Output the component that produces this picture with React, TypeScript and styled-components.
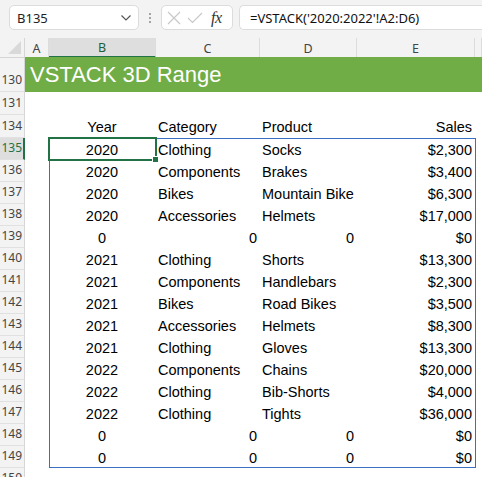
import React from "react";
import styled, { createGlobalStyle, css } from "styled-components";

const Global = createGlobalStyle`
  html, body { margin: 0; padding: 0; background: #ffffff; overflow: hidden; }
  body { width: 482px; height: 477px; }
`;

const UI = `"Segoe UI", "Noto Sans", "Liberation Sans", sans-serif`;
const CELL = `"Liberation Sans", Arial, sans-serif`;
const COLS = "25px 24px 107px 104px 97px 118px 1fr";

const Page = styled.div`
  width: 482px;
  height: 477px;
  overflow: hidden;
  display: flex;
  flex-direction: column;
  background: #fff;
`;

const Toolbar = styled.div`
  height: 38px;
  flex: 0 0 38px;
  background: #f3f3f3;
  display: flex;
  align-items: flex-start;
  padding: 5px 0 0 9px;
  box-sizing: border-box;
`;

const NameBox = styled.div`
  width: 130px;
  height: 25px;
  box-sizing: border-box;
  background: #fff;
  border: 1px solid #dcdcdc;
  border-radius: 5px;
  display: flex;
  align-items: center;
  justify-content: space-between;
  padding: 0 6px 0 7px;
  font-family: ${UI};
  font-size: 13px;
  color: #222;
`;

const Dots = styled.div`
  width: 22px;
  height: 25px;
  display: flex;
  flex-direction: column;
  align-items: center;
  justify-content: center;
  gap: 2px;
  & > span {
    width: 2px;
    height: 2px;
    background: #8a8a8a;
    border-radius: 1px;
  }
`;

const FxBox = styled.div`
  width: 72px;
  height: 25px;
  box-sizing: border-box;
  background: #fff;
  border: 1px solid #dcdcdc;
  border-radius: 5px;
  display: flex;
  align-items: center;
  padding-left: 5px;
  gap: 6px;
`;

const FxText = styled.span`
  font-family: "Liberation Serif", "Times New Roman", serif;
  font-style: italic;
  font-size: 16px;
  color: #333;
  margin-left: 2px;
  letter-spacing: -0.5px;
`;

const FormulaBox = styled.div`
  flex: 1;
  margin-left: 6px;
  height: 25px;
  box-sizing: border-box;
  background: #fff;
  border: 1px solid #dcdcdc;
  border-right: none;
  border-radius: 5px 0 0 5px;
  display: flex;
  align-items: center;
  padding-left: 10px;
  font-family: ${UI};
  font-size: 13px;
  color: #111;
`;

const Sheet = styled.div`
  position: relative;
  flex: 1;
  overflow: hidden;
`;

const Row = styled.div<{ $h: number }>`
  display: grid;
  grid-template-columns: ${COLS};
  height: ${(p) => p.$h}px;
`;

const Corner = styled.div`
  background: #f3f3f3;
  border-right: 1px solid #d6d6d6;
  border-bottom: 1px solid #d6d6d6;
  box-sizing: border-box;
  position: relative;
  &::after {
    content: "";
    position: absolute;
    right: 3px;
    bottom: 3px;
    width: 0;
    height: 0;
    border-left: 13px solid transparent;
    border-bottom: 13px solid #d9d9d9;
  }
`;

const ColHead = styled.div<{ $sel?: boolean }>`
  box-sizing: border-box;
  display: flex;
  align-items: center;
  justify-content: center;
  font-family: ${UI};
  font-size: 12.5px;
  color: #444;
  background: #f3f3f3;
  border-right: 1px solid #dcdcdc;
  border-bottom: 1px solid #d6d6d6;
  padding-top: 1px;
  ${(p) =>
    p.$sel &&
    css`
      background: #dedede;
      color: #1e5e3a;
      border-bottom: 2px solid #217346;
    `}
`;

const RowHead = styled.div<{ $sel?: boolean }>`
  box-sizing: border-box;
  display: flex;
  align-items: flex-end;
  justify-content: flex-end;
  padding: 0 2px 3px 0;
  font-family: ${UI};
  font-size: 12px;
  color: #444;
  background: #f3f3f3;
  border-right: 1px solid #d6d6d6;
  border-bottom: 1px solid #e1e1e1;
  ${(p) =>
    p.$sel &&
    css`
      background: #dedede;
      color: #217346;
      border-right: 2px solid #217346;
      padding-right: 1px;
    `}
`;

const Title = styled.div`
  grid-column: 2 / -1;
  background: #70ad47;
  color: #ffffff;
  font-family: ${CELL};
  font-size: 22px;
  display: flex;
  align-items: center;
  padding-left: 5px;
  padding-top: 1px;
`;

type Align = "left" | "center" | "right";

const Cell = styled.div<{ $align?: Align }>`
  font-family: ${CELL};
  font-size: 14.5px;
  color: #000;
  display: flex;
  align-items: center;
  white-space: nowrap;
  overflow: visible;
  padding: 1px 3px 0 2px;
  justify-content: ${(p) =>
    p.$align === "right" ? "flex-end" : p.$align === "center" ? "center" : "flex-start"};
`;

const SpillBox = styled.div`
  position: absolute;
  left: 49px;
  top: 100px;
  width: 427px;
  height: 330px;
  box-sizing: border-box;
  border: 1px solid #3b6fc2;
  pointer-events: none;
`;

const Selection = styled.div`
  position: absolute;
  left: 48px;
  top: 99px;
  width: 109px;
  height: 24px;
  box-sizing: border-box;
  border: 2px solid #217346;
  pointer-events: none;
  &::after {
    content: "";
    position: absolute;
    right: -4px;
    bottom: -4px;
    width: 5px;
    height: 5px;
    background: #217346;
    border: 1px solid #fff;
  }
`;

type Val = string | number;
type DataRow = [number, Val, Val, Val, string];

const data: DataRow[] = [
  [135, 2020, "Clothing", "Socks", "$2,300"],
  [136, 2020, "Components", "Brakes", "$3,400"],
  [137, 2020, "Bikes", "Mountain Bike", "$6,300"],
  [138, 2020, "Accessories", "Helmets", "$17,000"],
  [139, 0, 0, 0, "$0"],
  [140, 2021, "Clothing", "Shorts", "$13,300"],
  [141, 2021, "Components", "Handlebars", "$2,300"],
  [142, 2021, "Bikes", "Road Bikes", "$3,500"],
  [143, 2021, "Accessories", "Helmets", "$8,300"],
  [144, 2021, "Clothing", "Gloves", "$13,300"],
  [145, 2022, "Components", "Chains", "$20,000"],
  [146, 2022, "Clothing", "Bib-Shorts", "$4,000"],
  [147, 2022, "Clothing", "Tights", "$36,000"],
  [148, 0, 0, 0, "$0"],
  [149, 0, 0, 0, "$0"],
];

const alignOf = (v: Val): Align => (typeof v === "number" ? "right" : "left");

export default function App() {
  return (
    <Page>
      <Global />
      <Toolbar>
        <NameBox>
          <span>B135</span>
          <svg width="12" height="8" viewBox="0 0 12 8">
            <path d="M1.5 1.5 L6 6 L10.5 1.5" fill="none" stroke="#555" strokeWidth="1.2" />
          </svg>
        </NameBox>
        <Dots>
          <span />
          <span />
          <span />
        </Dots>
        <FxBox>
          <svg width="14" height="14" viewBox="0 0 14 14">
            <path d="M1 1 L13 13 M13 1 L1 13" stroke="#c8c8c8" strokeWidth="1.2" fill="none" />
          </svg>
          <svg width="16" height="14" viewBox="0 0 16 14">
            <path d="M1 7 L5.5 11.5 L15 2" stroke="#c8c8c8" strokeWidth="1.2" fill="none" />
          </svg>
          <FxText>fx</FxText>
        </FxBox>
        <FormulaBox>=VSTACK('2020:2022'!A2:D6)</FormulaBox>
      </Toolbar>
      <Sheet>
        <Row $h={19}>
          <Corner />
          <ColHead>A</ColHead>
          <ColHead $sel>B</ColHead>
          <ColHead>C</ColHead>
          <ColHead>D</ColHead>
          <ColHead>E</ColHead>
          <ColHead />
        </Row>
        <Row $h={35}>
          <RowHead>130</RowHead>
          <Title>VSTACK 3D Range</Title>
        </Row>
        <Row $h={23}>
          <RowHead>131</RowHead>
        </Row>
        <Row $h={23}>
          <RowHead>134</RowHead>
          <Cell />
          <Cell $align="center">Year</Cell>
          <Cell>Category</Cell>
          <Cell>Product</Cell>
          <Cell $align="right">Sales</Cell>
          <Cell />
        </Row>
        {data.map(([n, y, c, p, s]) => (
          <Row $h={22} key={n}>
            <RowHead $sel={n === 135}>{n}</RowHead>
            <Cell />
            <Cell $align="center">{y}</Cell>
            <Cell $align={alignOf(c)}>{c}</Cell>
            <Cell $align={alignOf(p)}>{p}</Cell>
            <Cell $align="right">{s}</Cell>
            <Cell />
          </Row>
        ))}
        <Row $h={22}>
          <RowHead>150</RowHead>
        </Row>
        <SpillBox />
        <Selection />
      </Sheet>
    </Page>
  );
}
